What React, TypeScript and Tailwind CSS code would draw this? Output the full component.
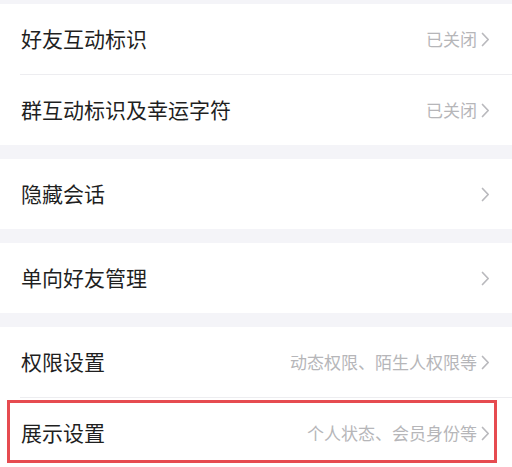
import { Fragment } from "react"

type Row = { label: string; hint?: string; marked?: boolean }

const groups: Row[][] = [
  [
    { label: "好友互动标识", hint: "已关闭" },
    { label: "群互动标识及幸运字符", hint: "已关闭" },
  ],
  [{ label: "隐藏会话" }],
  [{ label: "单向好友管理" }],
  [
    { label: "权限设置", hint: "动态权限、陌生人权限等" },
    { label: "展示设置", hint: "个人状态、会员身份等", marked: true },
  ],
]

const Chevron = () => (
  <svg width="9" height="15" viewBox="0 0 9 15" fill="none" className="ml-[4px]">
    <path d="M1.5 1.5 L7.2 7.5 L1.5 13.5" stroke="#b9b9bd" strokeWidth="1.7" strokeLinecap="round" strokeLinejoin="round" />
  </svg>
)

const SettingRow = ({ row }: { row: Row }) => (
  <div className="relative flex h-[70px] items-center justify-between pl-[21px] pr-[22px]">
    <span className="text-[21px] text-[#1f1f1f]">{row.label}</span>
    <div className="flex items-center">
      {row.hint && <span className="text-[17px] text-[#b6b6b9]">{row.hint}</span>}
      <Chevron />
    </div>
    {/* annotation box */}
    {row.marked && (
      <div className="pointer-events-none absolute left-[7px] right-[15px] top-[2px] bottom-[5px] border-[3px] border-[#e64b50]" />
    )}
  </div>
)

export default function App() {
  return (
    <div
      className="h-[467px] w-[512px] overflow-hidden bg-[#f4f4f8] pt-[4px]"
      style={{ fontFamily: '"Noto Sans CJK SC", "Noto Sans", sans-serif' }}
    >
      <div className="flex flex-col gap-[14px]">
        {groups.map((g, gi) => (
          <div key={gi} className="bg-white">
            {g.map((row, ri) => (
              <Fragment key={row.label}>
                {ri > 0 && <div className="ml-[20px] h-px bg-[#ededf0]" />}
                <SettingRow row={row} />
              </Fragment>
            ))}
          </div>
        ))}
      </div>
    </div>
  )
}
